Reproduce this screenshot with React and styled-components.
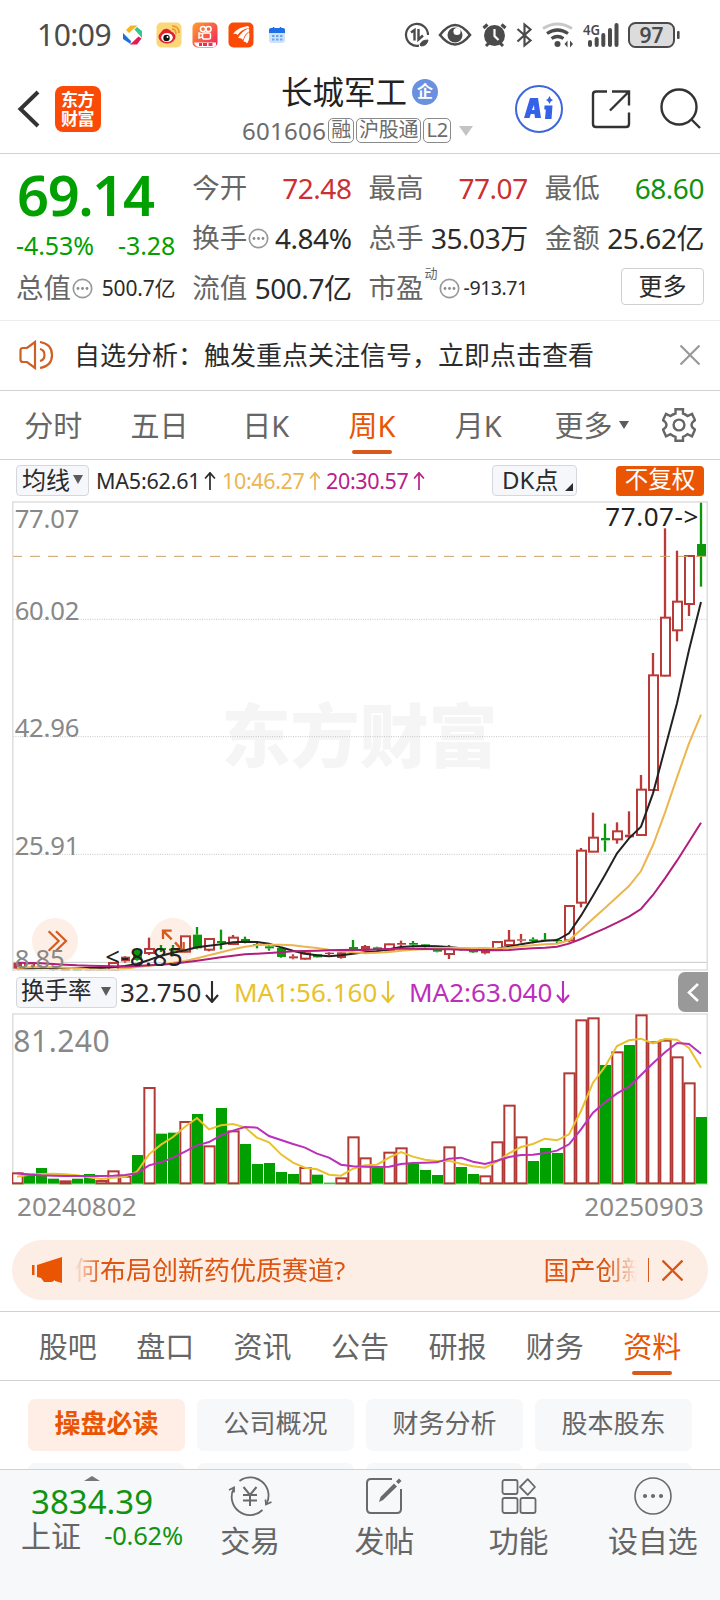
import React from "react";
import styled, { createGlobalStyle, css } from "styled-components";

const RED = "#b23a36";
const GREEN = "#00a000";
const ORANGE = "#ea5504";

const GlobalStyle = createGlobalStyle`
  * {
    box-sizing: border-box;
  }
  body {
    margin: 0;
    background: #fff;
    color: #2b2b2b;
    font-family: "Noto Sans", "Noto Sans CJK SC", sans-serif;
  }
  svg {
    display: block;
    flex: none;
  }
`;

const Screen = styled.div`
  width: 720px;
  height: 1600px;
  display: flex;
  flex-direction: column;
  overflow: hidden;
  white-space: nowrap;
  line-height: 1;
`;

/* ---------- status bar ---------- */

const StatusBar = styled.div`
  height: 68px;
  padding: 1px 40px 0 37px;
  display: flex;
  align-items: center;
  justify-content: space-between;
  color: #4b4b4b;
`;

const StatusGroup = styled.div`
  display: flex;
  align-items: center;
`;

const Clock = styled.span`
  width: 84px;
  font-size: 30px;
  letter-spacing: -0.5px;
`;

/* ---------- header ---------- */

const Header = styled.header`
  height: 86px;
  display: flex;
  align-items: flex-start;
  border-bottom: 1px solid #d2d2d2;
`;

const HeaderSide = styled.div`
  width: 232px;
  height: 82px;
  padding-left: 16px;
  display: flex;
  align-items: center;
  gap: 15px;
`;

const AppLogo = styled.div`
  width: 46px;
  height: 46px;
  padding: 3px 6px 0;
  border-radius: 8px;
  background: #fb4a05;
  color: #fff;
  font-size: 17px;
  font-weight: 700;
  line-height: 19px;
  letter-spacing: -0.5px;
  font-family: "Noto Sans CJK SC", sans-serif;
  white-space: normal;
`;

const TitleBlock = styled.div`
  width: 256px;
  display: flex;
  flex-direction: column;
`;

const TitleRow = styled.div`
  height: 48px;
  display: flex;
  align-items: center;
  gap: 5px;
  padding-left: 49px;
  font-size: 31.5px;
  color: #222;
`;

const CompanyBadge = styled.span`
  width: 26px;
  height: 26px;
  border-radius: 50%;
  background: #6a90e0;
  color: #fff;
  font-size: 16px;
  font-weight: 700;
  line-height: 25px;
  text-align: center;
`;

const CodeRow = styled.div`
  height: 29px;
  display: flex;
  align-items: center;
  gap: 2px;
  padding-left: 10px;
  font-size: 24px;
  letter-spacing: 0.3px;
  color: #6c6c6c;
`;

const Tag = styled.span`
  height: 25px;
  padding: 0 2px;
  border: 1.5px solid #8a8a8a;
  border-radius: 5px;
  font-size: 20px;
  line-height: 21px;
  letter-spacing: -0.2px;
`;

const HeaderActions = styled.div`
  width: 232px;
  height: 82px;
  padding-left: 27px;
  display: flex;
  align-items: center;
`;

/* ---------- quote ---------- */

const Quote = styled.section`
  height: 167px;
  padding: 9px 16px 0;
  display: grid;
  grid-template-columns: repeat(4, 1fr);
  grid-template-rows: 50px 50px 50px;
  column-gap: 17px;
  border-bottom: 1px solid #ececec;
`;

const PriceCell = styled.div`
  grid-row: span 2;
  color: ${GREEN};
`;

const Price = styled.div`
  padding: 3px 0 0 1px;
  height: 64px;
  font-size: 56px;
  font-weight: 600;
  line-height: 56px;
  letter-spacing: -1.4px;
`;

const Change = styled.div`
  display: flex;
  justify-content: space-between;
  font-size: 25px;
  line-height: 36px;
  letter-spacing: -0.1px;
`;

const Cell = styled.div`
  display: flex;
  align-items: center;
  justify-content: space-between;
`;

const Label = styled.span`
  display: flex;
  align-items: center;
  gap: 1px;
  font-size: 27.5px;
  color: #666;
  sup {
    align-self: flex-start;
    font-size: 13px;
    margin: -7px 0 0 0;
  }
`;

const tones = { up: "#cc2f31", down: "#109410", plain: "#2b2b2b" };

const Value = styled.span`
  font-size: ${(p) => p.$size || 28}px;
  letter-spacing: ${(p) => p.$track || -0.45}px;
  color: ${(p) => tones[p.$tone || "plain"]};
`;

const MoreButton = styled.button`
  width: 83px;
  height: 37px;
  margin: -3px 0 0 auto;
  padding: 0 0 3px;
  border: 1px solid #d0d0d0;
  border-radius: 4px;
  background: #fff;
  color: #2b2b2b;
  font: 24px "Noto Sans CJK SC", sans-serif;
  line-height: 30px;
`;

/* ---------- notice ---------- */

const Notice = styled.div`
  height: 70px;
  padding: 0 20px 2px 19px;
  display: flex;
  align-items: center;
  border-bottom: 1px solid #d2d2d2;
`;

const NoticeText = styled.span`
  flex: 1;
  margin-left: 19px;
  font-size: 26px;
`;

/* ---------- period tabs ---------- */

const PeriodTabs = styled.nav`
  height: 69px;
  display: flex;
  align-items: center;
  border-bottom: 1px solid #d2d2d2;
`;

const tabText = css`
  display: flex;
  flex-direction: column;
  align-items: center;
  justify-content: space-between;
  color: ${(p) => (p.$active ? ORANGE : "#666")};
  &::after {
    content: "";
    width: 40px;
    height: 4px;
    border-radius: 2px;
    background: ${(p) => (p.$active ? "#d8591c" : "transparent")};
  }
`;

const PeriodTab = styled.div`
  ${tabText}
  width: 106.3px;
  height: 43px;
  margin-top: 15px;
  font-size: 29px;
`;

const PeriodMore = styled.div`
  width: 130.5px;
  padding-left: 23px;
  display: flex;
  align-items: center;
  gap: 6px;
  font-size: 29px;
  color: #666;
`;

const Caret = styled.i`
  width: 0;
  height: 0;
  border: ${(p) => p.$w || 5}px solid transparent;
  border-top: ${(p) => p.$h || 8}px solid ${(p) => p.$color || "#5c5c5c"};
  border-bottom: 0;
`;

const CodeCaret = styled(Caret)`
  margin-left: 6px;
`;

/* ---------- price chart ---------- */

const Legend = styled.div`
  height: 41px;
  padding: 0 16px;
  display: flex;
  align-items: center;
`;

const Pill = styled.div`
  width: ${(p) => p.$width}px;
  height: 31px;
  padding: 0 5px 2px;
  padding-left: ${(p) => p.$inset || 5}px;
  display: flex;
  align-items: center;
  justify-content: space-between;
  border: 1px solid #d4d7dc;
  border-radius: 4px;
  background: #f6f7fa;
  font-size: ${(p) => p.$size || 24}px;
`;

const Corner = styled.i`
  align-self: flex-end;
  border: 4px solid #2b2b2b;
  border-top-color: transparent;
  border-left-color: transparent;
  margin-right: -2px;
  margin-bottom: 2px;
`;

const LegendItem = styled.span`
  display: flex;
  align-items: center;
  gap: 4px;
  width: ${(p) => p.$width}px;
  margin-left: ${(p) => p.$gap || 0}px;
  font-size: ${(p) => p.$size || 21.5}px;
  letter-spacing: ${(p) => p.$track || 0}px;
  color: ${(p) => p.$color || "#2b2b2b"};
`;

const AdjustTag = styled.div`
  width: 88px;
  height: 30px;
  margin-left: auto;
  border-radius: 4px;
  background: ${ORANGE};
  color: #fff;
  font-size: 23.5px;
  line-height: 27px;
  text-align: center;
`;

const PricePane = styled.div`
  position: relative;
  height: 470px;
  margin: 0 12px;
`;

const Watermark = styled.div`
  position: absolute;
  inset: 192px 0 auto 0;
  padding-right: 1px;
  text-align: center;
  font-size: 69px;
  font-weight: 900;
  line-height: 84px;
  color: #f5f5f5;
`;

const PriceSvg = styled.svg`
  position: relative;
`;

const SubLegend = styled.div`
  height: 42px;
  padding: 0 12px 0 16px;
  display: flex;
  align-items: center;
`;

const DrawerHandle = styled.div`
  width: 30px;
  height: 40px;
  margin-left: auto;
  display: flex;
  align-items: center;
  justify-content: center;
  border-radius: 7px 0 0 7px;
  background: #999;
`;

const VolumePane = styled.div`
  height: 172px;
  margin: 0 12px;
`;

const DateRow = styled.div`
  height: 55px;
  padding: 8px 16px 0 17px;
  display: flex;
  justify-content: space-between;
  font-size: 26px;
  letter-spacing: 0.1px;
  color: #8a8a8a;
`;

/* ---------- promo banner ---------- */

const Banner = styled.div`
  height: 60px;
  margin: 0 12px;
  padding: 0 25px 0 19px;
  display: flex;
  align-items: center;
  border-radius: 30px;
  background: #fceee5;
  color: #dd5510;
`;

const Ticker = styled.div`
  width: 565px;
  margin-left: 11px;
  padding-bottom: 1px;
  display: flex;
  justify-content: space-between;
  overflow: hidden;
  font-size: 26px;
  line-height: 36px;
  mask-image: linear-gradient(
    90deg,
    transparent,
    #000 28px,
    #000 calc(100% - 30px),
    transparent
  );
`;

const TickerNext = styled.span`
  width: 93px;
`;

const BannerDivider = styled.i`
  width: 1.5px;
  height: 24px;
  margin: 0 13px 0 11px;
  background: #d8591c;
`;

/* ---------- info tabs ---------- */

const InfoTabs = styled.nav`
  height: 70px;
  margin-top: 11px;
  padding: 0 19px;
  display: flex;
  border-top: 1px solid #d2d2d2;
  border-bottom: 1px solid #d2d2d2;
`;

const InfoTab = styled.div`
  ${tabText}
  flex: 1;
  padding: 20px 0 5px;
  font-size: 29px;
`;

const Chips = styled.div`
  height: 88px;
  padding: 18px 28px 0;
  display: grid;
  grid-template-columns: repeat(4, 1fr);
  grid-auto-rows: 52px;
  gap: 12px;
  overflow: hidden;
`;

const Chip = styled.div`
  border-radius: 7px;
  background: ${(p) => (p.$active ? "#ffeee6" : "#f7f8fa")};
  color: ${(p) => (p.$active ? ORANGE : "#666")};
  font-size: 26px;
  font-weight: ${(p) => (p.$active ? 700 : 400)};
  line-height: 49px;
  text-align: center;
`;

/* ---------- bottom bar ---------- */

const BottomBar = styled.footer`
  flex: 1;
  display: flex;
  border-top: 1px solid #d2d2d2;
  background: #f7f8fa;
`;

const IndexBox = styled.div`
  width: 183px;
  padding: 6px 0 0 21px;
  display: flex;
  flex-direction: column;
`;

const UpMark = styled.i`
  width: 0;
  height: 0;
  margin-left: 63px;
  border: 8px solid transparent;
  border-bottom: 5px solid #777;
  border-top: 0;
`;

const IndexValue = styled.div`
  padding-left: 10px;
  font-size: 33px;
  line-height: 42px;
  color: #109410;
`;

const IndexRow = styled.div`
  display: flex;
  justify-content: space-between;
  align-items: center;
  height: 26px;
  font-size: 30px;
  color: #666;
`;

const IndexChange = styled.span`
  font-size: 25.5px;
  letter-spacing: -0.2px;
  color: #109410;
`;

const Action = styled.div`
  flex: 1;
  padding-top: 6px;
  display: flex;
  flex-direction: column;
  align-items: center;
  gap: 10px;
  font-size: 30px;
  color: #666;
`;

/* ---------- chart data, y in thirds of a pixel ---------- */

// [color, body top, body bottom, high, low, hollow]
const candles = [
  ["r", 218, 236, 216, 238, 0],
  ["r", 220, 236, 220, 236, 1],
  ["r", 228, 236, 226, 238, 0],
  ["g", 235, 240, 233, 242, 0],
  ["r", 237, 242, 235, 243, 0],
  ["g", 237, 242, 235, 243, 0],
  ["r", 233, 242, 232, 243, 0],
  ["r", 236, 242, 235, 243, 0],
  ["r", 219, 240, 218, 242, 1],
  ["r", 200, 214, 198, 218, 0],
  ["g", 180, 210, 178, 212, 0],
  ["r", 177, 189, 143, 195, 1],
  ["g", 174, 180, 165, 186, 0],
  ["g", 176, 182, 165, 198, 0],
  ["r", 139, 185, 138, 187, 1],
  ["g", 134, 175, 111, 178, 0],
  ["r", 147, 179, 145, 184, 1],
  ["g", 153, 159, 119, 178, 0],
  ["r", 143, 162, 135, 165, 1],
  ["g", 147, 155, 140, 160, 0],
  ["g", 162, 167, 154, 175, 0],
  ["g", 169, 175, 163, 182, 0],
  ["g", 174, 201, 173, 203, 0],
  ["r", 199, 205, 193, 208, 0],
  ["r", 190, 206, 182, 209, 1],
  ["g", 193, 202, 192, 203, 0],
  ["r", 188, 192, 186, 195, 0],
  ["r", 187, 204, 185, 206, 0],
  ["g", 171, 178, 150, 184, 0],
  ["r", 168, 181, 165, 184, 0],
  ["g", 172, 180, 170, 182, 0],
  ["r", 163, 181, 161, 183, 1],
  ["r", 159, 164, 152, 172, 0],
  ["g", 159, 164, 153, 172, 0],
  ["g", 163, 170, 162, 172, 0],
  ["g", 178, 185, 177, 187, 0],
  ["r", 176, 192, 165, 207, 1],
  ["g", 175, 180, 174, 182, 0],
  ["g", 178, 187, 177, 189, 0],
  ["r", 178, 190, 176, 193, 0],
  ["r", 156, 179, 155, 181, 1],
  ["r", 152, 165, 120, 167, 1],
  ["r", 148, 152, 132, 158, 0],
  ["g", 148, 153, 142, 160, 0],
  ["g", 149, 153, 129, 153, 0],
  ["g", 150, 154, 146, 160, 0],
  ["r", 48, 151, 46, 157, 1],
  ["r", -118, 38, -126, 52, 1],
  ["r", -157, -115, -232, -114, 1],
  ["g", -156, -149, -199, -115, 0],
  ["r", -176, -152, -203, -139, 1],
  ["r", -166, -158, -236, -156, 0],
  ["r", -301, -165, -345, -164, 1],
  ["r", -644, -300, -711, -299, 1],
  ["r", -817, -643, -1085, -641, 1],
  ["r", -865, -779, -1018, -746, 1],
  ["r", -1002, -858, -1004, -822, 1],
  ["g", -1038, -1002, -1164, -910, 0],
];

const ma5 = [
  236, 235, 234, 234, 234, 234, 234, 234, 232, 228, 222, 210, 197, 188, 181,
  172, 167, 163, 157, 155, 156, 161, 172, 182, 191, 196, 199, 196, 191, 187,
  184, 178, 171, 169, 168, 169, 171, 175, 180, 180, 176, 170, 163, 157, 152,
  150, 130, 77, 17, -45, -110, -155, -190, -290, -425, -560, -720, -864,
];
const ma10 = [
  234, 232, 231, 232, 233, 235, 238, 239, 239, 236, 231, 227, 223, 218, 213,
  205, 196, 187, 178, 170, 165, 164, 164, 166, 170, 174, 179, 183, 187, 190,
  188, 186, 182, 179, 178, 175, 173, 174, 175, 174, 176, 173, 169, 166, 163,
  161, 151, 119, 86, 54, 21, -12, -57, -135, -232, -338, -440, -526,
];
const ma20 = [
  218, 219, 220, 222, 224, 226, 227, 228, 229, 230, 228, 226, 224, 221, 217,
  212, 207, 202, 197, 193, 191, 189, 187, 184, 183, 182, 181, 180, 179, 180,
  178, 177, 176, 176, 177, 178, 178, 179, 180, 181, 181, 180, 177, 175, 173,
  170, 161, 147, 131, 115, 98, 80, 57, 15, -35, -88, -145, -202,
];

const turnover = [
  ["r", 848], ["g", 850], ["g", 834], ["g", 866], ["r", 872], ["g", 866],
  ["g", 852], ["r", 871], ["r", 842], ["r", 858], ["g", 795], ["r", 592],
  ["g", 731], ["g", 728], ["r", 694], ["g", 672], ["r", 767], ["g", 654],
  ["r", 722], ["g", 762], ["g", 822], ["g", 819], ["g", 846], ["g", 852],
  ["r", 832], ["g", 854], ["g", 878], ["r", 863], ["r", 740], ["r", 803],
  ["g", 833], ["r", 786], ["r", 773], ["g", 821], ["g", 840], ["g", 855],
  ["r", 770], ["g", 831], ["g", 852], ["r", 857], ["r", 755], ["r", 645],
  ["r", 740], ["g", 813], ["g", 774], ["g", 789], ["r", 548], ["r", 389],
  ["r", 383], ["g", 525], ["r", 485], ["g", 465], ["r", 374], ["r", 455],
  ["r", 450], ["r", 500], ["r", 578], ["g", 681],
];
const volMa1 = [
  860, 854, 852, 851, 853, 856, 862, 867, 863, 860, 845, 793, 764, 741, 710,
  684, 718, 706, 702, 712, 743, 757, 793, 818, 833, 838, 854, 857, 836, 826,
  824, 803, 786, 800, 809, 813, 812, 821, 829, 833, 815, 790, 771, 762, 746,
  751, 733, 663, 578, 530, 468, 451, 446, 460, 447, 449, 474, 533,
];
const volMa2 = [
  850, 854, 856, 857, 858, 858, 858, 858, 857, 855, 850, 826, 817, 803, 785,
  766, 756, 736, 722, 711, 713, 738, 750, 762, 773, 791, 803, 824, 829, 830,
  831, 830, 822, 819, 818, 817, 806, 803, 815, 822, 812, 801, 795, 794, 789,
  782, 763, 718, 668, 637, 610, 590, 555, 520, 487, 459, 462, 491,
];

const cx = (i) => 15 + i * 36;
const toLine = (ys) => ys.map((y, i) => `${cx(i)},${y}`).join(" ");

function Line({ data, color }) {
  return (
    <polyline points={toLine(data)} fill="none" stroke={color} strokeWidth="6" />
  );
}

function Candle({ index, data }) {
  const [tone, top, bottom, high, low, hollow] = data;
  const color = tone === "r" ? "#b93a38" : "#0c980c";
  const x = cx(index);
  return (
    <g stroke={color} strokeWidth="6">
      <line x1={x} x2={x} y1={high} y2={top} strokeWidth="7" />
      <line x1={x} x2={x} y1={bottom} y2={low} strokeWidth="7" />
      {hollow ? (
        <rect x={x - 12} y={top} width="27" height={bottom - top} fill="#fff" />
      ) : (
        <rect x={x - 12} y={top} width="27" height={bottom - top} fill={color} stroke="none" />
      )}
    </g>
  );
}

const axis = [
  ["77.07", -1087],
  ["60.02", -810],
  ["42.96", -458],
  ["25.91", -105],
  ["8.85", 234],
];

function PriceChart() {
  return (
    <PriceSvg width="696" height="470" viewBox="0 -1167 2088 1410">
      {[-812, -460, -107].map((y) => (
        <line key={y} x1="3" x2="2085" y1={y} y2={y} stroke="#c4c4c4" strokeWidth="3" strokeDasharray="3 4" />
      ))}
      <line x1="3" x2="2085" y1="217" y2="217" stroke="#c8c8c8" strokeWidth="3" />
      <circle cx="129" cy="153" r="69" fill="#fdeee6" />
      <circle cx="483" cy="153" r="69" fill="#fdeee6" />
      <path d="M110 124l30 29-30 29M132 124l30 29-30 29" fill="none" stroke="#d8591c" strokeWidth="6.5" />
      {candles.map((c, i) => (
        <Candle key={i} index={i} data={c} />
      ))}
      <path d="M453 147v-25h26M453 122l26 26" fill="none" stroke="#d8591c" strokeWidth="7" />
      <path d="M489 157l26 28M493 183h22v-27" fill="none" stroke="#d8591c" strokeWidth="7" />
      <Line data={ma5} color="#222" />
      <Line data={ma10} color="#ecb550" />
      <Line data={ma20} color="#b01f7c" />
      <line x1="0" x2="2088" y1="-1001" y2="-1001" stroke="#cf9f62" strokeWidth="3" strokeDasharray="30 24" />
      <path d="M2 243V-1164H2086V240H2" fill="none" stroke="#dedede" strokeWidth="5" />
      <g fontSize="77" fill="#888">
        {axis.map(([text, y]) => (
          <text key={text} x="8" y={y} textLength={text.length === 5 ? 194 : 150}>
            {text}
          </text>
        ))}
      </g>
      <text x="1780" y="-1093" fontSize="78" fill="#222" textLength="279">
        77.07-&gt;
      </text>
      <text x="280" y="229" fontSize="77" fill="#222" textLength="232">
        &lt;-8.85
      </text>
    </PriceSvg>
  );
}

function VolumeChart() {
  return (
    <svg width="696" height="172" viewBox="0 369 2088 516">
      <path d="M2 880V372H2086V880" fill="none" stroke="#dedede" strokeWidth="5" />
      <line x1="0" x2="2088" y1="883" y2="883" stroke="#c9f0c9" strokeWidth="4" />
      {turnover.map(([tone, y], i) =>
        tone === "r" ? (
          <rect key={i} x={i * 36 + 1} y={y + 2} width="31" height={878 - y} fill="#fff" stroke={RED} strokeWidth="6" />
        ) : (
          <rect key={i} x={i * 36} y={y} width="33" height={881 - y} fill={GREEN} />
        )
      )}
      <Line data={volMa1} color="#e8c22c" />
      <Line data={volMa2} color="#bb30bb" />
      <text x="4" y="486" fontSize="90" fill="#888" textLength="289">
        81.240
      </text>
    </svg>
  );
}

/* ---------- icons ---------- */

function Arrow({ up, width = 12, height = 18 }) {
  return (
    <svg width={width} height={height} viewBox="0 0 14 22" fill="none" stroke="currentColor" strokeWidth="2.100">
      {up ? <path d="M7 22V1M1 8l6-7 6 7" /> : <path d="M7 0v21M1 14l6 7 6-7" />}
    </svg>
  );
}

function Dots() {
  return (
    <svg width="21" height="21" viewBox="0 0 21 21">
      <circle cx="10.5" cy="10.5" r="9.2" fill="none" stroke="#999" strokeWidth="1.7" />
      <g fill="#8a8a8a">
        <circle cx="6" cy="10.5" r="1.4" />
        <circle cx="10.5" cy="10.5" r="1.4" />
        <circle cx="15" cy="10.5" r="1.4" />
      </g>
    </svg>
  );
}

function AppIcons() {
  return (
    <svg width="166" height="28" viewBox="121 21 166 28">
      <path d="M126 30l4.500-4.500h7L129 33z" fill="#f6b51c" />
      <path d="M137 27l5 4v7l-7.500-8.500z" fill="#35c58e" />
      <path d="M141.500 38.500l-4.500 6h-7l8.500-8z" fill="#e5194f" />
      <path d="M130.500 44l-7.500-5v-6l8 8z" fill="#1d70d8" />
      <rect x="156.500" y="22.500" width="25" height="25" rx="5" fill="#fbd77a" />
      <ellipse cx="167" cy="37" rx="8.500" ry="6.500" fill="#e0202c" />
      <path d="M161 33q2-5 7-4l3 2-2 5z" fill="#e0202c" />
      <ellipse cx="167" cy="37.500" rx="5.800" ry="4.500" fill="#fff" />
      <circle cx="166.500" cy="38" r="3.200" fill="#111" />
      <circle cx="167.500" cy="37" r="1" fill="#fff" />
      <path d="M172 29q4 0 4 5M172 26q7 0 7 7" fill="none" stroke="#f0952a" strokeWidth="1.600" />
      <defs>
        <linearGradient id="ks" x1="0" y1="0" x2="1" y2="1">
          <stop offset="0" stopColor="#ff9d2b" />
          <stop offset="1" stopColor="#f0215f" />
        </linearGradient>
      </defs>
      <rect x="192.500" y="22.500" width="25" height="25" rx="5" fill="url(#ks)" />
      <g fill="none" stroke="#fff" strokeWidth="1.500">
        <circle cx="203" cy="29" r="2.600" />
        <circle cx="208.500" cy="29" r="2.600" />
        <rect x="202.500" y="33" width="8" height="6" rx="1.500" />
        <path d="M202 34l-3-1v5l3-1" />
      </g>
      <path d="M194 42.500h22v2q0 2.500-3 2.500h-13q-5 0-6-4.500z" fill="#fff" />
      <path d="M199 44.500h3M203 44.500h4M208.500 44.500h4" stroke="#e8305a" strokeWidth="3" />
      <rect x="228.500" y="22.500" width="25" height="25" rx="5" fill="#fb4a05" />
      <path d="M233 34q5-7 15-8l1.500 2q-8 1-12 7-1.500-2-4.500-1zM238 38q4-7 10.500-9.500l1 2.500q-5 3-6.500 9-1.500-2.500-5-2zM243.500 41.500q1-6 5.500-9.500 1.500 7-2 11.500-1-2-3.500-2z" fill="#fff" />
      <rect x="269" y="28" width="16" height="15" rx="3" fill="#cfe2fb" />
      <path d="M269 33v-3q0-2 2-2h12q2 0 2 2v3z" fill="#1f6fe8" />
      <path d="M273.500 27v3M280.500 27v3" stroke="#1f6fe8" strokeWidth="1.500" />
      <path d="M272 36h2.500M276 36h2.500M280 36h2.500M272 39.500h2.500M276 39.500h2.500M280 39.500h2.500" stroke="#6ba6f3" strokeWidth="2" />
    </svg>
  );
}

function SystemIcons() {
  return (
    <svg width="278" height="30" viewBox="402 19 278 30">
      <g fill="none" stroke="#4b4b4b" strokeWidth="2.2">
        <path d="M419 44.700A11 11 0 1 1 428 34" />
        <path d="M411 31.500l3.500-2.500v10.500M418.500 28v10.500l4.500-4" strokeWidth="2.400" />
        <path d="M420 44q1-5 8-5-1 6-7 6z" fill="#4b4b4b" strokeWidth="1" />
        <path d="M440 34q15-20 30 0-15 19-30 0z" strokeWidth="2.600" />
        <path d="M483.500 27l4-3.500M505.500 27l-4-3.500" strokeWidth="3.200" />
        <path d="M486 45l3-3M503 45l-3-3" strokeWidth="3" />
        <path d="M517.500 28l13 11.500-6 5V23.500l6 5-13 12" />
        <path d="M543 27.500q14.500-9 29 0" stroke="#c8c8c8" strokeWidth="3" />
        <path d="M547 32.500q10.500-7 21 0M551.500 37.500q6-4 12 0" strokeWidth="3.200" />
      </g>
      <circle cx="455" cy="34" r="7.500" fill="#4b4b4b" />
      <circle cx="457" cy="30.500" r="3.600" fill="#fff" />
      <circle cx="494.500" cy="34.500" r="10.500" fill="#4b4b4b" />
      <path d="M494.500 28v7l4 4" fill="none" stroke="#fff" strokeWidth="2.200" />
      <circle cx="557.500" cy="43" r="3" fill="#4b4b4b" />
      <path d="M564.500 43l3-3.500v7zM573 43l-3-3.500v7z" fill="#4b4b4b" />
      <text x="583" y="34" fontSize="15" fontWeight="600" fill="#4b4b4b" textLength="17" lengthAdjust="spacingAndGlyphs">
        4G
      </text>
      <g stroke="#4b4b4b" strokeWidth="4" strokeLinecap="round">
        <path d="M590 41v3M596.700 38v6M603.300 34v10M610 29v15M616.500 24v20" />
      </g>
      <rect x="629" y="22" width="45" height="24" rx="6.500" fill="#dcdcdc" stroke="#4b4b4b" strokeWidth="2" />
      <rect x="677" y="30" width="2.600" height="8" rx="1" fill="#4b4b4b" />
      <text x="651.500" y="42" fontSize="21" fontWeight="600" fill="#4b4b4b" textAnchor="middle">
        97
      </text>
    </svg>
  );
}

function AiIcon() {
  return (
    <svg width="48" height="48" viewBox="0 0 48 48">
      <circle cx="24" cy="24" r="23" fill="none" stroke="#3b66dc" strokeWidth="2" />
      <path d="M9 33l6-20h8l3 20h-6l-.6-4h-3.600l-1.300 4zM17 25h2.400l-.4-5z" fill="#3560e8" fillRule="evenodd" />
      <path d="M29.500 20.500h8l-1 13.500h-6.500l.8-9.500h-1.500z" fill="#3560e8" />
      <path d="M34.500 11q.8 3 3.500 4-2.700 1-3.500 4-.8-3-3.500-4 2.700-1 3.500-4z" fill="#3560e8" />
    </svg>
  );
}

function Gear() {
  return (
    <svg width="34" height="34" viewBox="0 0 34 34" fill="none" stroke="#666" strokeWidth="2.400">
      <path d="M13.500 1.300h7.500v4.200q2.500.8 4.500 2.500L30 5.800l3 6.500q-3.500 2.200-3.500 4.700T33 21.500l-3 6.800-4.500-2.100q-2 1.800-4.500 2.600v4h-7.500v-4q-2.500-.8-5-2.600L4 28.300l-3-6.800Q4.500 19.500 4.500 17T1 12.300l3-6.500L8.500 8q2.500-1.700 5-2.500z" />
      <circle cx="17" cy="17" r="5.400" />
    </svg>
  );
}

function TradeIcon() {
  return (
    <svg width="44" height="40" viewBox="0 0 44 40" fill="none" stroke="#6a6a6a" strokeWidth="1.8">
      <path d="M11.500 5A18.200 18.200 0 0 1 38.500 28M34.500 34A18.200 18.200 0 0 1 6 12" />
      <path d="M1 14l5-2.500v5M43.500 26l-5.500 2.500-.5-5" />
      <path d="M15.500 11l6.500 8 6.500-8M15 19h14M15 24.500h14M22 19v11" strokeWidth="2" />
    </svg>
  );
}

function PostIcon() {
  return (
    <svg width="38" height="40" viewBox="0 0 38 40" fill="none" stroke="#6a6a6a" strokeWidth="2">
      <path d="M27 3H6q-4 0-4 4v26q0 4 4 4h26q4 0 4-4V13" />
      <path d="M14 26l1.500-5L29 7.500l3 3-14 13.500zM31 5.500l3-3 2.500 2.500-3 3z" fill="#6a6a6a" stroke="none" />
    </svg>
  );
}

function FeatureIcon() {
  return (
    <svg width="36" height="40" viewBox="0 0 36 40" fill="none" stroke="#6a6a6a" strokeWidth="1.8">
      <rect x="1.500" y="4" width="15" height="14" rx="2" />
      <path d="M26.700 3.200l7.300 7.800-7.300 7.800-7.700-7.800z" strokeLinejoin="round" />
      <rect x="1.500" y="22" width="15" height="15" rx="2" />
      <rect x="19.500" y="22" width="15" height="15" rx="2" />
    </svg>
  );
}

function OptionIcon() {
  return (
    <svg width="38" height="40" viewBox="0 0 38 40">
      <circle cx="19" cy="20" r="18" fill="none" stroke="#6a6a6a" strokeWidth="1.600" />
      <g fill="#6a6a6a">
        <circle cx="11" cy="20" r="2.100" />
        <circle cx="19" cy="20" r="2.100" />
        <circle cx="27" cy="20" r="2.100" />
      </g>
    </svg>
  );
}

function Cross({ size, color }) {
  return (
    <svg width={size} height={size} viewBox="0 0 20 20" stroke={color} strokeWidth="2.200">
      <path d="M0.500 0.500l19 19M19.500 0.500l-19 19" />
    </svg>
  );
}

const periods = ["分时", "五日", "日K", "周K", "月K"];
const infoTabs = ["股吧", "盘口", "资讯", "公告", "研报", "财务", "资料"];
const chips = ["操盘必读", "公司概况", "财务分析", "股本股东", "", "", "", ""];
const actions = [
  ["交易", TradeIcon],
  ["发帖", PostIcon],
  ["功能", FeatureIcon],
  ["设自选", OptionIcon],
];

function App() {
  return (
    <Screen>
      <GlobalStyle />
      <StatusBar>
        <StatusGroup>
          <Clock>10:09</Clock>
          <AppIcons />
        </StatusGroup>
        <SystemIcons />
      </StatusBar>

      <Header>
        <HeaderSide>
          <svg width="24" height="38" viewBox="0 0 24 38" fill="none" stroke="#333" strokeWidth="4">
            <path d="M22 2L4.500 19 22 36" />
          </svg>
          <AppLogo>东方财富</AppLogo>
        </HeaderSide>
        <TitleBlock>
          <TitleRow>
            长城军工<CompanyBadge>企</CompanyBadge>
          </TitleRow>
          <CodeRow>
            601606<Tag>融</Tag>
            <Tag>沪股通</Tag>
            <Tag>L2</Tag>
            <CodeCaret $w={7.5} $h={10} $color="#c4c4c4" />
          </CodeRow>
        </TitleBlock>
        <HeaderActions>
          <AiIcon />
          <svg width="140" height="48" viewBox="563 85 140 48" fill="none" stroke="#333" strokeWidth="2.400">
            <path d="M607 91.500h-11q-3 0-3 3v29.500q0 3 3 3h30q3 0 3-3v-11.500M612 91.500h17v14M629 91.500l-19 19" />
            <circle cx="679" cy="107" r="17.500" />
            <path d="M691 119l9 9" />
          </svg>
        </HeaderActions>
      </Header>

      <Quote>
        <PriceCell>
          <Price>69.14</Price>
          <Change>
            <span>-4.53%</span>
            <span>-3.28</span>
          </Change>
        </PriceCell>
        <Cell>
          <Label>今开</Label>
          <Value $tone="up">72.48</Value>
        </Cell>
        <Cell>
          <Label>最高</Label>
          <Value $tone="up">77.07</Value>
        </Cell>
        <Cell>
          <Label>最低</Label>
          <Value $tone="down">68.60</Value>
        </Cell>
        <Cell>
          <Label>
            换手
            <Dots />
          </Label>
          <Value>4.84%</Value>
        </Cell>
        <Cell>
          <Label>总手</Label>
          <Value>35.03万</Value>
        </Cell>
        <Cell>
          <Label>金额</Label>
          <Value>25.62亿</Value>
        </Cell>
        <Cell>
          <Label>
            总值
            <Dots />
          </Label>
          <Value $size={21} $track={-0.2}>
            500.7亿
          </Value>
        </Cell>
        <Cell>
          <Label>流值</Label>
          <Value>500.7亿</Value>
        </Cell>
        <Cell>
          <Label>
            市盈<sup>动</sup>
            <Dots />
          </Label>
          <Value $size={19.5}>-913.71</Value>
        </Cell>
        <Cell>
          <MoreButton>更多</MoreButton>
        </Cell>
      </Quote>

      <Notice>
        <svg width="36" height="30" viewBox="0 0 36 30" fill="none" stroke="#cf5f25" strokeWidth="2.200">
          <path d="M16 2v26l-8-6H4q-2.500 0-2.500-2.500v-9Q1.500 8 4 8h4zM21 9q4.500 1 4.500 6T21 21M21 2q12 2 12 13T21 28" />
        </svg>
        <NoticeText>自选分析：触发重点关注信号，立即点击查看</NoticeText>
        <Cross size={20} color="#999" />
      </Notice>

      <PeriodTabs>
        {periods.map((name) => (
          <PeriodTab key={name} $active={name === "周K"}>
            {name}
          </PeriodTab>
        ))}
        <PeriodMore>
          更多
          <Caret />
        </PeriodMore>
        <Gear />
      </PeriodTabs>

      <Legend>
        <Pill $width={73}>
          均线
          <Caret $h={9} />
        </Pill>
        <LegendItem $width={126} $gap={7} $track={-0.2}>
          MA5:62.61
          <Arrow up />
        </LegendItem>
        <LegendItem $width={104} $color="#ecb550" $track={-0.35}>
          10:46.27
          <Arrow up />
        </LegendItem>
        <LegendItem $width={166} $color="#b9208a" $track={-0.35}>
          20:30.57
          <Arrow up />
        </LegendItem>
        <Pill $width={85} $inset={9}>
          DK点
          <Corner />
        </Pill>
        <AdjustTag>不复权</AdjustTag>
      </Legend>
      <PricePane>
        <Watermark>东方财富</Watermark>
        <PriceChart />
      </PricePane>

      <SubLegend>
        <Pill $width={101} $size={23.5} $inset={4}>
          换手率
          <Caret $h={9} />
        </Pill>
        <LegendItem $width={114} $gap={3} $size={26}>
          32.750
          <Arrow width={14} height={22} />
        </LegendItem>
        <LegendItem $width={175} $size={26} $color="#e8c22c">
          MA1:56.160
          <Arrow width={14} height={22} />
        </LegendItem>
        <LegendItem $width={175} $size={26} $color="#bb30bb">
          MA2:63.040
          <Arrow width={14} height={22} />
        </LegendItem>
        <DrawerHandle>
          <svg width="12" height="19" viewBox="0 0 12 19" fill="none" stroke="#fff" strokeWidth="2.600">
            <path d="M11 1L2 9.500 11 18" />
          </svg>
        </DrawerHandle>
      </SubLegend>
      <VolumePane>
        <VolumeChart />
      </VolumePane>
      <DateRow>
        <span>20240802</span>
        <span>20250903</span>
      </DateRow>

      <Banner>
        <svg width="32" height="26" viewBox="0 0 32 26" fill={ORANGE}>
          <path d="M1 8h2.500v10H1zM6 8L31 0v26l-7-2v-1l-3 2h-8l-3-4-4-1z" />
        </svg>
        <Ticker>
          <span>何布局创新药优质赛道?</span>
          <TickerNext>国产创新</TickerNext>
        </Ticker>
        <BannerDivider />
        <Cross size={21} color="#dd5510" />
      </Banner>

      <InfoTabs>
        {infoTabs.map((name) => (
          <InfoTab key={name} $active={name === "资料"}>
            {name}
          </InfoTab>
        ))}
      </InfoTabs>
      <Chips>
        {chips.map((name, i) => (
          <Chip key={i} $active={i === 0}>
            {name}
          </Chip>
        ))}
      </Chips>

      <BottomBar>
        <IndexBox>
          <UpMark />
          <IndexValue>3834.39</IndexValue>
          <IndexRow>
            上证
            <IndexChange>-0.62%</IndexChange>
          </IndexRow>
        </IndexBox>
        {actions.map(([name, Icon]) => (
          <Action key={name}>
            <Icon />
            {name}
          </Action>
        ))}
      </BottomBar>
    </Screen>
  );
}

export default App;
